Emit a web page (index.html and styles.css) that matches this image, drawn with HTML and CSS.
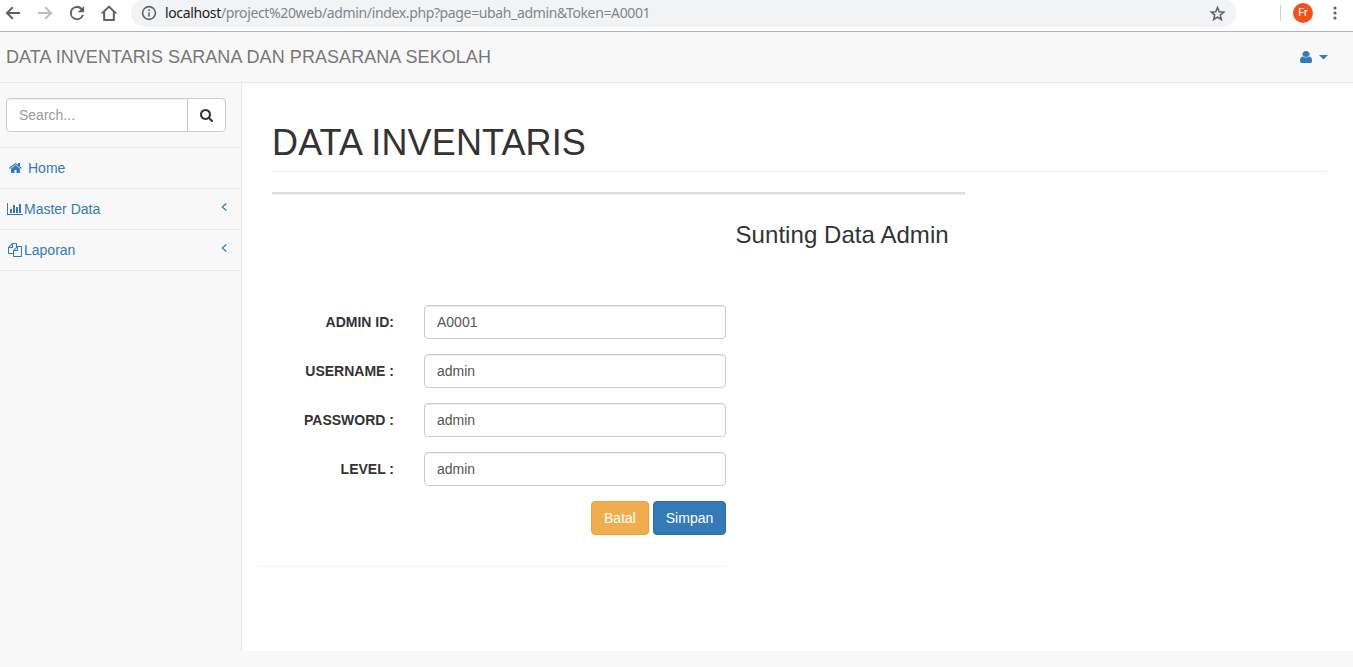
FILE: index.html
```html
<!DOCTYPE html>
<html lang="id">
<head>
<meta charset="utf-8">
<title>Data Inventaris</title>
<link rel="stylesheet" href="styles.css">
</head>
<body>
<div class="toolbar">
  <svg class="tool-icon" viewBox="0 0 24 24"><path d="M21.500 10.700H7.200l5.500-5.500L10.800 3.200 2 12l8.800 8.800 1.900-2-5.500-5.500h14.300z"/></svg>
  <svg class="tool-icon disabled" viewBox="0 0 24 24"><path d="M2.500 10.700h14.300l-5.500-5.500 1.900-2L22 12l-8.800 8.800-1.900-2 5.500-5.500H2.500z"/></svg>
  <svg class="tool-icon" viewBox="0 0 24 24"><path d="M18.700 5.300A9.400 9.400 0 0 0 12 2.500a9.500 9.500 0 1 0 9.200 12h-2.900a6.800 6.800 0 1 1-6.300-9.200c1.900 0 3.500.8 4.700 2L13 11H21.500V2.500z"/></svg>
  <svg class="tool-icon" viewBox="0 0 24 24"><path d="M12 1.500.7 12.700h3.500V22.500h15.600v-9.800h3.500zm0 3.800 5.100 5V19.900H6.900v-9.600z"/></svg>
  <div class="address">
    <svg class="info" viewBox="0 0 16 16"><circle cx="8" cy="8" r="6.400"/><path d="M8 7.200v4.200M8 4.300v1.600"/></svg>
    <span class="url"><span class="host">localhost</span>/project%20web/admin/index.php?page=ubah_admin&amp;Token=A0001</span>
    <svg class="star" viewBox="0 0 24 24"><path d="m12 3.500 2.400 6 6.400.5-4.900 4.200 1.500 6.300-5.400-3.400-5.400 3.400 1.500-6.300L3.200 10l6.400-.5z"/></svg>
  </div>
  <span class="divider"></span>
  <span class="avatar">Fr</span>
  <svg class="dots" viewBox="0 0 4 14"><circle cx="2" cy="2" r="1.600"/><circle cx="2" cy="7" r="1.600"/><circle cx="2" cy="12" r="1.600"/></svg>
</div>
<header class="navbar">
  <span class="brand">DATA INVENTARIS SARANA DAN PRASARANA SEKOLAH</span>
  <a class="user">
    <svg class="user-icon" viewBox="0 128 1280 1536" preserveAspectRatio="none"><path d="M1280 1399q0 109-62.500 187t-150.500 78h-854q-88 0-150.500-78t-62.500-187q0-85 8.500-160.500t31.500-152 58.500-131 94-89 134.500-34.500q131 128 313 128t313-128q76 0 134.500 34.500t94 89 58.500 131 31.500 152 8.500 160.500zm-256-887q0 159-112.500 271.500t-271.500 112.500-271.500-112.500-112.500-271.500 112.500-271.500 271.500-112.500 271.500 112.500 112.500 271.500z"/></svg>
    <svg class="caret" viewBox="0 0 9 5"><path d="M0 0h9L4.500 4.600z"/></svg>
  </a>
</header>
<div class="layout">
  <nav class="sidebar">
    <div class="search">
      <input class="search-input" type="text" placeholder="Search...">
      <button class="search-button" type="button" aria-label="Search"><svg class="fa search-icon" viewBox="0 0 1664 1792"><path d="M1152 704q0-185-131.500-316.500t-316.500-131.500-316.500 131.500-131.500 316.500 131.500 316.500 316.500 131.500 316.500-131.500 131.500-316.500zm512 832q0 52-38 90t-90 38q-54 0-90-38l-343-342q-179 124-399 124-143 0-273.500-55.500t-225-150-150-225-55.500-273.500 55.500-273.500 150-225 225-150 273.500-55.500 273.500 55.500 225 150 150 225 55.500 273.500q0 220-124 399l343 343q37 37 37 90z"/></svg></button>
    </div>
    <a class="item home"><svg class="fa" viewBox="0 0 1664 1792"><path d="M1408 992v480q0 26-19 45t-45 19h-384v-384h-256v384h-384q-26 0-45-19t-19-45v-480q0-1 .5-3t.5-3l575-474 575 474q1 2 1 6zm223-69l-62 74q-8 9-21 11h-3q-13 0-21-7l-692-577-692 577q-12 8-24 7-13-2-21-11l-62-74q-8-10-7-23.500t11-21.500l719-599q32-26 76-26t76 26l244 204v-195q0-14 9-23t23-9h192q14 0 23 9t9 23v408l219 182q10 8 11 21.500t-7 23.500z"/></svg><span>Home</span></a>
    <a class="item"><svg class="fa wide" viewBox="0 0 2048 1792"><path d="M640 896v512h-256v-512h256zm384-512v1024h-256v-1024h256zm1024 1152v128h-2048v-1536h128v1408h1920zm-640-896v768h-256v-768h256zm384-384v1152h-256v-1152h256z"/></svg><span>Master Data</span><svg class="angle" viewBox="0 0 6 8"><path d="M5.300.5 1.300 4l4 3.500"/></svg></a>
    <a class="item"><svg class="fa copy" viewBox="0 0 1792 1792"><path d="M1696 384q40 0 68 28t28 68v1216q0 40-28 68t-68 28h-960q-40 0-68-28t-28-68v-288h-544q-40 0-68-28t-28-68v-672q0-40 20-88t48-76l408-408q28-28 76-48t88-20h416q40 0 68 28t28 68v328q68-40 128-40h416zm-544 213l-299 299h299v-299zm-640-384l-299 299h299v-299zm196 647l316-316v-416h-384v416q0 40-28 68t-68 28h-416v640h512v-256q0-40 20-88t48-76zm956 804v-1152h-384v416q0 40-28 68t-68 28h-416v640h896z"/></svg><span>Laporan</span><svg class="angle" viewBox="0 0 6 8"><path d="M5.300.5 1.300 4l4 3.500"/></svg></a>
  </nav>
  <main class="content">
    <h1 class="page-header">DATA INVENTARIS</h1>
    <div class="rule"></div>
    <h3 class="form-title">Sunting Data Admin</h3>
    <form class="panel">
      <label class="row"><span class="label">ADMIN ID:</span><input class="field" type="text" value="A0001"></label>
      <label class="row"><span class="label">USERNAME :</span><input class="field" type="text" value="admin"></label>
      <label class="row"><span class="label">PASSWORD :</span><input class="field" type="text" value="admin"></label>
      <label class="row"><span class="label">LEVEL :</span><input class="field" type="text" value="admin"></label>
      <div class="actions"><button class="btn warning" type="button">Batal</button><button class="btn primary" type="button">Simpan</button></div>
    </form>
  </main>
</div>
</body>
</html>
```
FILE: styles.css
```css
* { box-sizing: border-box; }
body { margin: 0; height: 667px; overflow: hidden; background: #f8f8f8; color: #333; font: 14px/20px "Liberation Sans", Arial, sans-serif; }
input, button { font: inherit; margin: 0; }
svg { display: block; flex: none; fill: currentColor; }
.toolbar { display: flex; height: 32px; padding: 0 16px 5px 4px; align-items: center; background: #fff; border-bottom: 1px solid #b2b4b6; color: #5f6368; }
.tool-icon { width: 18px; height: 18px; margin-right: 14px; }
.disabled { color: #bbbdbf; }
.address { display: flex; align-items: center; width: 1105px; height: 28px; margin-left: -1px; padding: 0 10px; background: #f1f3f4; border-radius: 14px; }
.info { width: 16px; height: 16px; fill: none; stroke: #5f6368; stroke-width: 1.600; }
.url { flex: 1; margin-left: 8px; color: #80868b; font: 14px/20px "Noto Sans", "Open Sans", sans-serif; letter-spacing: -.365px; white-space: nowrap; }
.host { color: #202124; }
.star { width: 17px; height: 17px; fill: none; stroke: #5f6368; stroke-width: 2.200; }
.divider { width: 1px; height: 16px; margin-left: 44px; background: #cfd1d3; }
.avatar { width: 20px; height: 20px; margin-left: 12px; border-radius: 50%; background: #f4511e; color: #fff; font: 11px/20px Roboto, sans-serif; text-align: center; }
.dots { width: 4px; height: 14px; margin-left: 20px; }
.navbar { display: flex; justify-content: space-between; align-items: center; height: 51px; padding: 0 25px 0 6px; border-bottom: 1px solid #e7e7e7; }
.brand { color: #777; font-size: 18px; letter-spacing: .065px; white-space: nowrap; }
.user { display: flex; align-items: center; gap: 7px; color: #337ab7; }
.user-icon { width: 12px; height: 12px; }
.caret { width: 9px; height: 5px; }
.layout { display: flex; height: 568px; }
.sidebar { width: 241px; }
.search { display: flex; height: 65px; padding: 15px 15px 16px 6px; border-bottom: 1px solid #e7e7e7; }
.search-input { width: 182px; height: 34px; padding: 6px 12px; border: 1px solid #ccc; border-radius: 4px 0 0 4px; background: #fff; box-shadow: inset 0 1px 1px rgba(0,0,0,.075); }
.search-input::placeholder { color: #999; opacity: 1; }
.search-button { width: 39px; height: 34px; margin-left: -1px; padding: 1px 12px 0; border: 1px solid #ccc; border-radius: 0 4px 4px 0; background: #fff; color: #333; }
.fa { width: 13px; height: 14px; }
.item { display: flex; align-items: center; height: 41px; padding: 0 14px 0 7px; border-bottom: 1px solid #e7e7e7; color: #337ab7; }
.home { padding-left: 8.500px; gap: 6.500px; }
.wide { width: 16px; margin-right: 1px; }
.copy { width: 14px; margin: 0 2px 0 1px; }
.angle { width: 6px; height: 8px; margin: -5px 0 0 auto; fill: none; stroke: currentColor; stroke-width: 1.200; }
.content { flex: 1; border-left: 1px solid #e7e7e7; background: #fff; padding: 40px 26px 0 30px; }
.page-header { height: 49px; margin: 0; border-bottom: 1px solid #eee; font-size: 36px; font-weight: 400; line-height: 40px; letter-spacing: .13px; }
.rule { width: 693px; height: 3px; margin-top: 20px; background: #ddd; border-bottom: 1px solid #eee; }
.form-title { width: 300px; margin: 27px 0 0 463.500px; font-size: 24px; font-weight: 400; line-height: 26px; letter-spacing: .06px; white-space: nowrap; }
.panel { width: 470px; height: 319px; margin: 0 0 0 -15px; padding: 57px 1px 0; border-bottom: 1px solid #f3f3f3; border-radius: 4px; }
.row { display: flex; justify-content: flex-end; align-items: center; height: 34px; margin-bottom: 15px; }
.label { margin-right: 30px; font-weight: 700; white-space: nowrap; }
.field { width: 302px; height: 34px; padding: 6px 12px; border: 1px solid #ccc; border-radius: 4px; background: #fff; color: #555; box-shadow: inset 0 1px 1px rgba(0,0,0,.075); }
.actions { display: flex; justify-content: flex-end; gap: 4px; }
.btn { height: 34px; padding: 0; border: 1px solid; border-radius: 4px; color: #fff; }
.warning { width: 58px; background: #f0ad4e; border-color: #eea236; }
.primary { width: 73px; background: #337ab7; border-color: #2e6da4; }
```
